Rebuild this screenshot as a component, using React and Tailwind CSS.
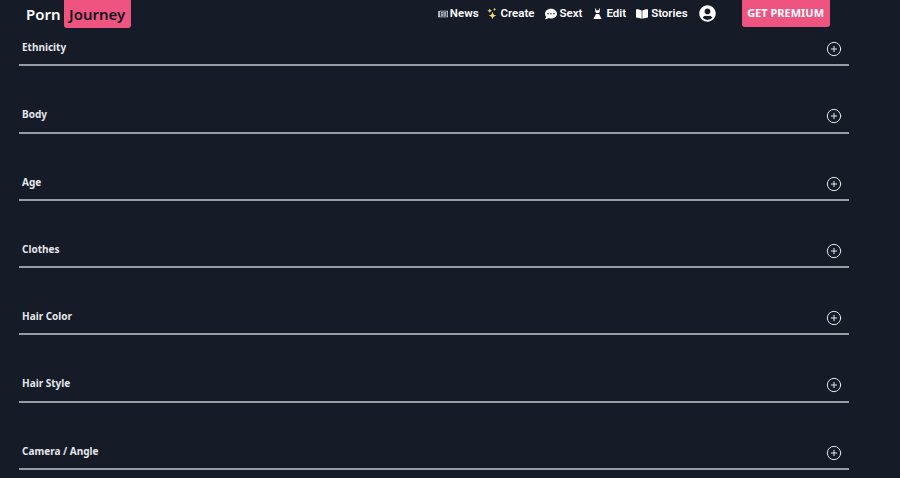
import { FaRegNewspaper, FaCommentDots, FaBookOpen, FaUserCircle } from "react-icons/fa";
import { BsStars } from "react-icons/bs";
import { CirclePlus } from "lucide-react";

const filters = ["Ethnicity", "Body", "Age", "Clothes", "Hair Color", "Hair Style", "Camera / Angle"];

function DressIcon() {
    return (
        <svg width="11" height="12" viewBox="0 0 12 12" fill="currentColor">
            <path d="M3.5 0h1v2h3V0h1v3.5L7.5 5h-3L3.5 3.5z" />
            <path d="M4.3 6h3.4L10.5 11.5h-9z" />
        </svg>
    );
}

function NavLink({ icon, label, gap }) {
    return (
        <a className={`flex items-center text-[11.5px] font-semibold text-white ${gap}`}>
            {icon}
            <span>{label}</span>
        </a>
    );
}

export default function App() {
    return (
        <div className="h-[478px] overflow-hidden bg-[#161b28] font-['Roboto',sans-serif]">
            <header className="flex h-[28px] items-start">
                <div className="ml-[26px] flex items-start font-['Noto_Sans',sans-serif] text-[15px] font-semibold leading-[28px]">
                    <span className="text-white">Porn</span>
                    <span className="ml-[3px] h-[28px] rounded-b-[3px] bg-[#ef5480] px-[5.5px] text-[#10131c]">Journey</span>
                </div>
                <nav className="ml-[307px] flex h-[27px] items-center">
                    <div className="flex items-center gap-[10px]">
                        <NavLink gap="gap-[2px]" icon={<FaRegNewspaper size={10} className="text-gray-300" />} label="News" />
                        <NavLink gap="gap-[3px] -ml-[2px]" icon={<BsStars size={11} className="text-[#f7dc7a]" />} label="Create" />
                        <NavLink gap="gap-[3px]" icon={<FaCommentDots size={12} />} label="Sext" />
                        <NavLink gap="gap-[3px]" icon={<DressIcon />} label="Edit" />
                        <NavLink gap="gap-[3px]" icon={<FaBookOpen size={12} />} label="Stories" />
                    </div>
                    <FaUserCircle size={17} className="ml-[11px] text-white" />
                    <button className="ml-[26px] h-[27px] w-[88px] rounded-b-[3px] bg-[#ef5480] font-['Noto_Sans',sans-serif] text-[11px] font-bold text-white">
                        GET PREMIUM
                    </button>
                </nav>
            </header>
            <main className="ml-[19px] w-[830px]">
                {filters.map((name, i) => (
                    <div
                        key={name}
                        className={`flex h-[38.25px] justify-between border-b-2 border-[#9a9ca3] pl-[3px] pr-[8px] ${i === 0 ? "" : "mt-[29px]"}`}
                    >
                        <span className="mt-[12px] font-['Noto_Sans',sans-serif] text-[10px] leading-[14px] font-bold text-[#e5e7eb]">{name}</span>
                        <CirclePlus size={16} strokeWidth={1.5} className="mt-[13px] mr-[-1px] text-[#e5e7eb]" />
                    </div>
                ))}
            </main>
        </div>
    );
}
